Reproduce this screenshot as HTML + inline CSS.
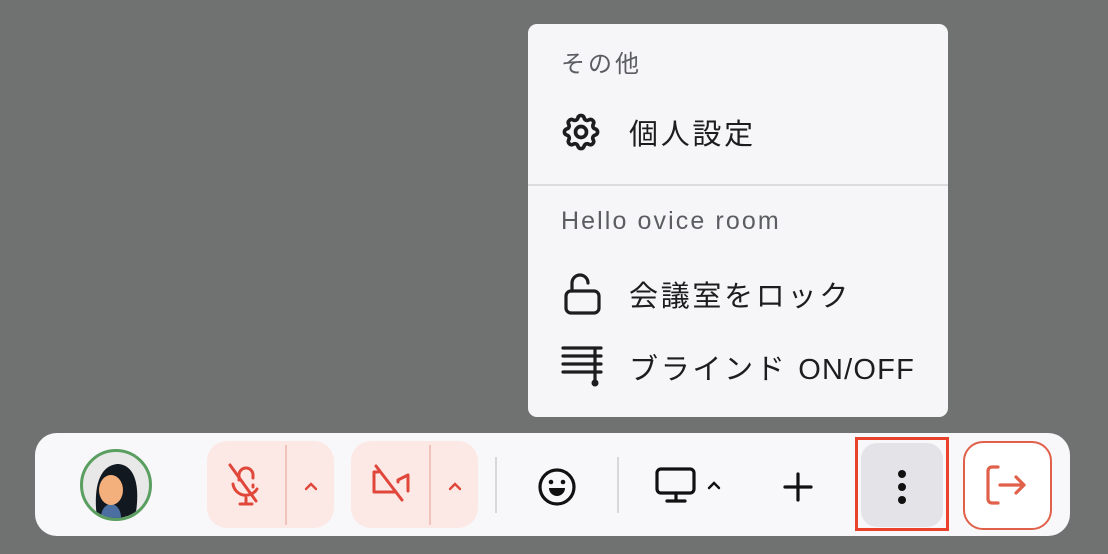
<!DOCTYPE html>
<html><head><style>
body{margin:0;width:1108px;height:554px;background:#6f7271;position:relative;overflow:hidden;font-family:"Liberation Sans","Noto Sans CJK JP",sans-serif}
.a{position:absolute}
.menu{left:528px;top:24px;width:420px;height:393px;background:#f6f6f8;border-radius:9px}
.h{color:#5b5d62;font-size:25px;letter-spacing:2.1px}
.it{color:#1d1d1f;font-size:29px;letter-spacing:2.7px}
.bar{left:35px;top:433px;width:1035px;height:103px;background:#f8f8fa;border-radius:22px}
.pink{background:#fce9e6;border-radius:20px;height:87px;top:441px;width:127px}
</style></head><body>
<div class="a menu"></div>
<div class="a h" style="left:561px;top:44px;font-size:24px;letter-spacing:3px">その他</div>
<svg class="a" style="left:559px;top:110px" width="44" height="44" viewBox="0 0 24 24" fill="none" stroke="#1d1d1f" stroke-width="2" stroke-linejoin="round"><path d="M10.3 4.3c.4-1.8 3-1.8 3.4 0a1.7 1.7 0 0 0 2.6 1.1c1.5-.9 3.3.8 2.4 2.4a1.7 1.7 0 0 0 1 2.5c1.8.4 1.8 3 0 3.4a1.7 1.7 0 0 0-1 2.6c.9 1.5-.9 3.300-2.4 2.4a1.7 1.7 0 0 0-2.6 1c-.4 1.8-3 1.8-3.4 0a1.7 1.7 0 0 0-2.6-1c-1.5.9-3.3-.9-2.4-2.4a1.7 1.7 0 0 0-1-2.6c-1.8-.4-1.8-3 0-3.4a1.7 1.7 0 0 0 1-2.5c-.9-1.6.9-3.3 2.4-2.4 1 .6 2.3.1 2.6-1.1z"/><circle cx="12" cy="12" r="3"/></svg>
<div class="a it" style="left:629px;top:111px">個人設定</div>
<div class="a" style="left:528px;top:184px;width:420px;height:2px;background:#dcdcde"></div>
<div class="a h" style="left:561px;top:207px">Hello ovice room</div>
<svg class="a" style="left:562px;top:270px" width="42" height="46" viewBox="0 0 42 46" fill="none" stroke="#1d1d1f" stroke-width="3.2" stroke-linecap="round"><rect x="4" y="21" width="33" height="22" rx="5"/><path d="M10 21v-8a8 8 0 0 1 16 0"/></svg>
<div class="a it" style="left:629px;top:273px">会議室をロック</div>
<svg class="a" style="left:560px;top:346px" width="44" height="42" viewBox="0 0 44 42" stroke="#1d1d1f" stroke-width="3.2" stroke-linecap="round"><path d="M3 2h38M3 10h38M3 18h38M3 26h38M35 2v34"/><circle cx="35" cy="37" r="3.5" fill="#1d1d1f" stroke="none"/></svg>
<div class="a it" style="left:629px;top:346px">ブラインド <span style="letter-spacing:1.2px">ON/OFF</span></div>

<div class="a bar"></div>
<div class="a" style="left:80px;top:449px;width:66px;height:66px;border:3px solid #5a9e60;border-radius:50%;background:#e8e8e8;overflow:hidden">
<svg width="66" height="66" viewBox="0 0 66 66"><path d="M14 66c-4-30 2-52 20-54 18 0 24 22 18 54z" fill="#111820"/><path d="M18 66c0-10 6-14 10-14s10 4 10 14z" fill="#4a6fa0"/><ellipse cx="28" cy="38" rx="12" ry="15" fill="#f4b07c"/><path d="M16 34c2-16 22-18 30-4v-10c-10-8-28-4-30 14z" fill="#111820"/></svg></div>
<div class="a pink" style="left:207px"></div>
<div class="a" style="left:285px;top:445px;width:2px;height:80px;background:#f3c2ba"></div>
<svg class="a" style="left:224px;top:462px" width="44" height="46" viewBox="0 0 44 46" fill="none" stroke="#e0473a" stroke-width="3" stroke-linecap="round"><path d="M15 18v-5a7 7 0 0 1 14 0v3M29 23v2M9 22a13 13 0 0 0 24 5M22 36v6M16 42h12M6 3l26 36"/></svg>
<svg class="a" style="left:302px;top:480px" width="18" height="12" viewBox="0 0 18 12" fill="none" stroke="#e0473a" stroke-width="2.4" stroke-linecap="round"><path d="M4 9l5-5 5 5"/></svg>
<div class="a pink" style="left:351px"></div>
<div class="a" style="left:429px;top:445px;width:2px;height:80px;background:#f3c2ba"></div>
<svg class="a" style="left:368px;top:464px" width="46" height="42" viewBox="0 0 46 42" fill="none" stroke="#e0473a" stroke-width="3" stroke-linecap="round" stroke-linejoin="round"><path d="M10 8H6v20h22M30 18v-2l10-5v16M8 2l26 34"/></svg>
<svg class="a" style="left:446px;top:480px" width="18" height="12" viewBox="0 0 18 12" fill="none" stroke="#e0473a" stroke-width="2.4" stroke-linecap="round"><path d="M4 9l5-5 5 5"/></svg>
<div class="a" style="left:495px;top:457px;width:2px;height:56px;background:#d8d8da"></div>
<svg class="a" style="left:536px;top:466px" width="42" height="42" viewBox="0 0 42 42"><circle cx="21" cy="21" r="17" fill="none" stroke="#111" stroke-width="3.2"/><circle cx="15" cy="16" r="2.3" fill="#111"/><circle cx="27" cy="16" r="2.3" fill="#111"/><path d="M13 22h16a8 8 0 0 1-16 0z" fill="#111"/></svg>
<div class="a" style="left:617px;top:457px;width:2px;height:56px;background:#d8d8da"></div>
<svg class="a" style="left:654px;top:466px" width="44" height="40" viewBox="0 0 44 40" fill="none" stroke="#111" stroke-width="3.2" stroke-linecap="round" stroke-linejoin="round"><rect x="3" y="3" width="37" height="24" rx="4"/><path d="M22 27v7M13 35h18"/></svg>
<svg class="a" style="left:705px;top:479px" width="18" height="12" viewBox="0 0 18 12" fill="none" stroke="#111" stroke-width="2.4" stroke-linecap="round"><path d="M4 9l5-5 5 5"/></svg>
<svg class="a" style="left:782px;top:471px" width="32" height="32" viewBox="0 0 32 32" stroke="#111" stroke-width="3.2" stroke-linecap="round"><path d="M16 3v26M3 16h26"/></svg>
<div class="a" style="left:855px;top:437px;width:88px;height:88px;border:3px solid #e8432a;box-sizing:content-box"></div>
<div class="a" style="left:861px;top:443px;width:82px;height:84px;background:#e4e3e7;border-radius:16px"></div>
<svg class="a" style="left:892px;top:468px" width="20" height="40" viewBox="0 0 20 40" fill="#111"><circle cx="10" cy="6" r="4"/><circle cx="10" cy="19" r="4"/><circle cx="10" cy="32" r="4"/></svg>
<div class="a" style="left:963px;top:441px;width:85px;height:85px;border:2px solid #e0604a;border-radius:20px;background:#fff"></div>
<svg class="a" style="left:984px;top:464px" width="46" height="42" viewBox="0 0 46 42" fill="none" stroke="#e0604a" stroke-width="3.2" stroke-linecap="round" stroke-linejoin="round"><path d="M14 3H8a4 4 0 0 0-4 4v28a4 4 0 0 0 4 4h6M16 21h24M32 13l8 8-8 8"/></svg>
</body></html>
